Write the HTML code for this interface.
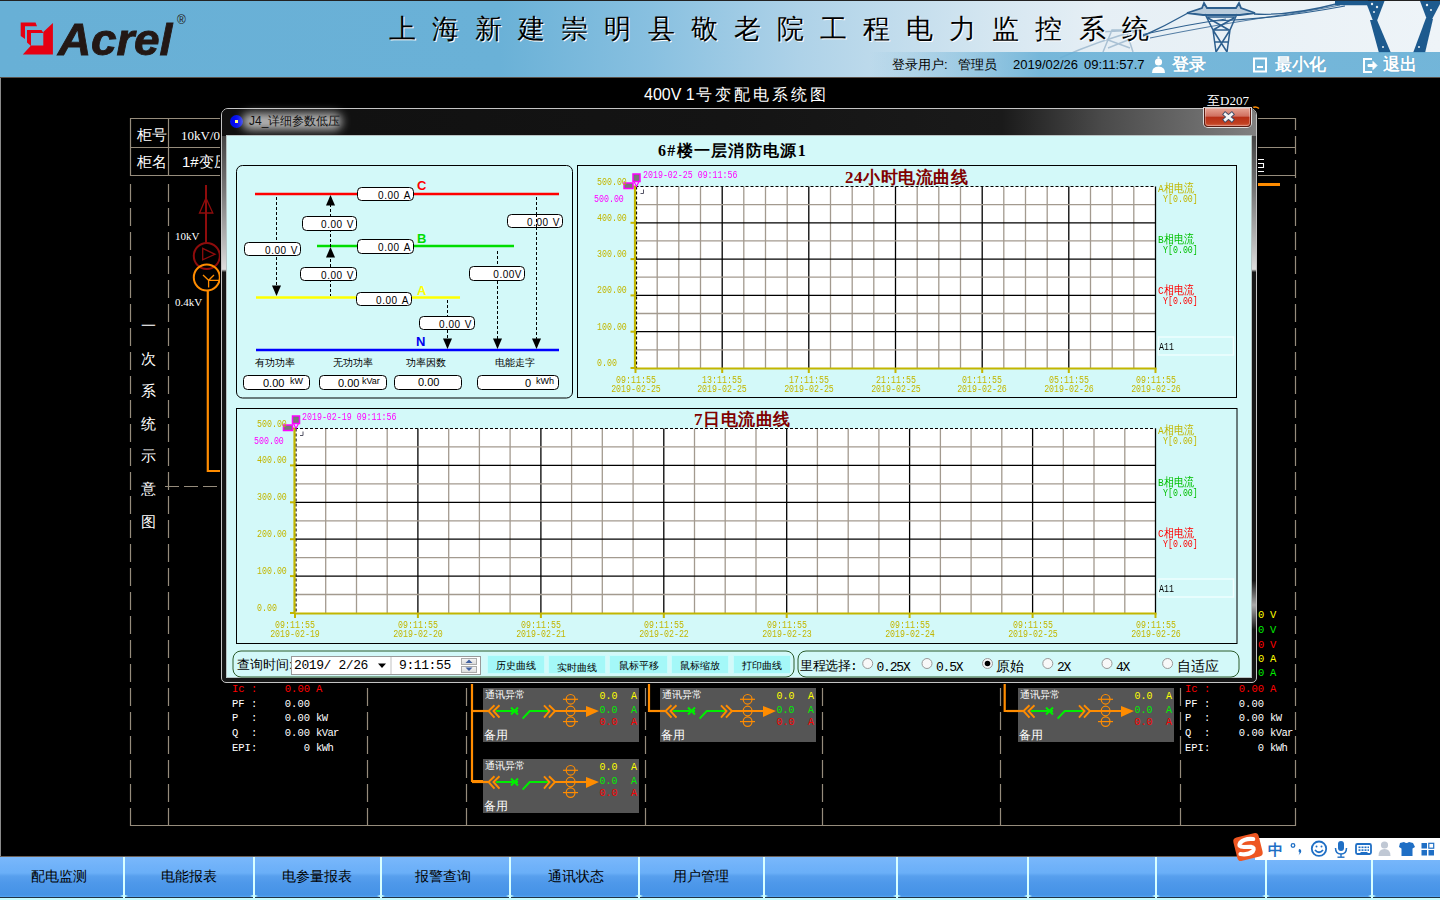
<!DOCTYPE html>
<html><head><meta charset="utf-8">
<style>
*{margin:0;padding:0;box-sizing:border-box}
html,body{width:1440px;height:900px;overflow:hidden;background:#000;font-family:"Liberation Sans",sans-serif}
.a{position:absolute}
#hdr{left:0;top:0;width:1440px;height:77px;background:linear-gradient(90deg,#68b0d6 0px,#6ab1d7 500px,#88c0e0 650px,#aed2e8 800px,#d6e7f1 1000px,#e6eff5 1100px,#eef4f8 1440px);border-top:1px solid #222;overflow:hidden}
#title{left:389px;top:12px;font-family:"Liberation Serif",serif;font-size:27px;letter-spacing:16.1px;color:#000;text-shadow:1px 1px 0 #fff;white-space:nowrap;line-height:34px}
#infobar{left:0;top:52px;width:1440px;height:25px;background:linear-gradient(90deg,rgba(104,176,214,0) 0px,rgba(104,176,214,0) 870px,rgba(104,176,214,0.88) 1040px,rgba(104,176,214,0.92) 1440px)}
.info{font-size:13px;color:#000;top:57px;white-space:nowrap;line-height:16px}
.wbtn{font-size:17px;color:#fff;top:55px;font-weight:bold;text-shadow:0 0 1px #4a90b8;white-space:nowrap;line-height:20px}
#nav{left:0;top:856px;width:1440px;height:44px;border-top:1px solid #6a6058;background:linear-gradient(180deg,#7ab8fb 0px,#70b2f9 9px,#6aaff8 16px,#58a0ee 19px,#4e98ea 26px,#4592e6 38px,#56a6f4 40px,#56a6f4 41px)}
#navline{left:0;top:897px;width:1440px;height:1px;background:#234}
#navline2{left:0;top:898px;width:1440px;height:2px;background:#c8fcff}
.sep{top:857px;width:2px;height:41px;background:#d8ffff}
.nt{top:866px;font-size:14px;color:#000;white-space:nowrap;line-height:20px}
</style></head><body>
<!-- HEADER -->
<div id="hdr" class="a">
</div>
<!-- HDRX -->
<!-- HEADER EXTRAS -->
<svg class="a" style="left:0;top:0" width="1440" height="77">
<g fill="#e60012">
<path d="M20.7 22.4 H35.5 L37 26.2 H25 V39 L20.7 36 Z"/>
<path d="M27 30 H41.5 L43.5 33 H31 V46 L27 42.5 Z"/>
<path d="M52.9 23 L52.9 54.4 L22.8 54.4 L31 45.5 L43.3 45.5 L43.3 32 Z"/>
</g>
<g opacity="0.35" stroke="#3a6d98" fill="none" stroke-width="1.5">
<path d="M1103 52 L1112 30 L1126 30 L1133 52 M1098 32 L1140 30 M1108 40 L1130 48 M1128 40 L1108 48"/>
<path d="M1060 58 Q1100 40 1140 30"/>
</g>
<g stroke="#2d5f8e" fill="none">
<path d="M1143 36 Q1165 26 1188 13" stroke-width="1.4"/>
<path d="M1143 34.5 Q1190 24 1226 19" stroke-width="1.2"/>
<path d="M1150 38 Q1230 22 1290 14 Q1320 9 1340 5" stroke-width="1.1" opacity="0.8"/>
<path d="M1254 14 Q1290 16 1336 4" stroke-width="1.3"/>
<path d="M1210 21 Q1270 20 1345 6" stroke-width="1.2"/>
<path d="M1187 13 L1202 8 L1204 3 L1207 8 L1236 8 L1239 3 L1241 8 L1255 13 L1240 15 L1203 15 Z" stroke-width="1.8" fill="#2d5f8e" fill-opacity="0.25"/>
<path d="M1205 14 L1213 30 L1216 52 M1237 14 L1230 30 L1227 52 M1207 17 L1235 17 M1213 30 L1230 30 M1208 18 L1229 30 M1234 18 L1213 30 M1213 30 L1227 52 M1230 30 L1216 52 M1215 42 L1228 42" stroke-width="1.5"/>
<path d="M1335 3 L1368 3" stroke="#1d5a8e" stroke-width="4.5"/>
<path d="M1365.5 1 L1384.5 1 L1375 26 Z" fill="#1d5a8e" stroke="none"/>
<path d="M1370 20 L1377 20 L1391 53 L1379 53 Z" fill="#1d5a8e" stroke="none"/>
<path d="M1420 1 L1440 1 L1440 4 L1429 25 Z" fill="#1d5a8e" stroke="none"/>
<path d="M1426 18 L1433 19 L1425 53 L1413 53 Z" fill="#1d5a8e" stroke="none"/>
<g fill="#e8f0f5" stroke="none"><circle cx="1372" cy="4" r="1.2"/><circle cx="1377" cy="7" r="1.2"/><circle cx="1374" cy="12" r="1"/><circle cx="1383" cy="47" r="1"/><circle cx="1427" cy="5" r="1.2"/><circle cx="1431" cy="10" r="1"/><circle cx="1419" cy="47" r="1"/></g>
</g>
</svg>
<div class="a" style="left:58px;top:15px;font-size:46px;font-weight:bold;font-style:italic;color:#231815;line-height:50px;white-space:nowrap;letter-spacing:-0.2px;-webkit-text-stroke:0.9px #231815;transform:scaleY(0.98);transform-origin:left top">Acrel</div>
<div class="a" style="left:177px;top:13px;font-size:12px;color:#231815;line-height:14px">®</div>


<!-- /HDRX -->
<div id="title" class="a">上海新建崇明县敬老院工程电力监控系统</div>
<div id="infobar" class="a"></div>
<div class="a info" style="left:892px">登录用户:</div>
<div class="a info" style="left:958px">管理员</div>
<div class="a info" style="left:1013px">2019/02/26</div>
<div class="a info" style="left:1084px">09:11:57.7</div>
<div class="a wbtn" style="left:1172px">登录</div>
<div class="a wbtn" style="left:1275px">最小化</div>
<div class="a wbtn" style="left:1383px">退出</div>
<svg class="a" style="left:1150px;top:56px" width="280" height="20">
<g fill="#fff">
<circle cx="8.5" cy="6" r="3.6"/>
<path d="M2 17 Q2 10.5 8.5 10.5 Q15 10.5 15 17 Z"/>
<path d="M7.5 0.5 h2 v2 h-2z"/>
</g>
<g fill="none" stroke="#fff" stroke-width="2">
<rect x="104" y="2.5" width="12" height="13"/>
<line x1="107" y1="11" x2="113" y2="11"/>
<path d="M222 3 L214 3 L214 16 L222 16"/>
</g>
<path d="M218 8.5 L223 8.5 L223 5.5 L227 9.5 L223 13.5 L223 10.5 L218 10.5 Z" fill="#fff" stroke="#fff" stroke-width="1"/>
</svg>


<!-- BACKGROUND DIAGRAM -->
<svg class="a" style="left:0;top:0" width="1440" height="900">
<line x1="0.5" y1="77" x2="0.5" y2="856" stroke="#8a8a8a" stroke-width="1"/>
<line x1="0" y1="77.5" x2="1440" y2="77.5" stroke="#5a5048" stroke-width="1"/>
<g stroke="#968c7c" stroke-width="1.2" fill="none">
<line x1="130.5" y1="118.5" x2="1295.5" y2="118.5"/>
<line x1="130.5" y1="147.5" x2="1295.5" y2="147.5"/>
<line x1="130.5" y1="175.5" x2="1295.5" y2="175.5"/>
<line x1="130.5" y1="118" x2="130.5" y2="176"/>
<line x1="168.5" y1="118" x2="168.5" y2="176"/>
<line x1="130.5" y1="825.5" x2="1295.5" y2="825.5"/>
</g>
<g stroke="#968c7c" stroke-width="1.2" stroke-dasharray="18 6" fill="none">
<line x1="130.5" y1="184" x2="130.5" y2="826"/>
<line x1="168.5" y1="184" x2="168.5" y2="826"/>
<line x1="367.5" y1="184" x2="367.5" y2="826"/>
<line x1="466.5" y1="184" x2="466.5" y2="826"/>
<line x1="645.5" y1="184" x2="645.5" y2="826"/>
<line x1="822.5" y1="184" x2="822.5" y2="826"/>
<line x1="1000.5" y1="184" x2="1000.5" y2="830"/>
<line x1="1180.5" y1="184" x2="1180.5" y2="826"/>
<line x1="1295.5" y1="118" x2="1295.5" y2="826" stroke-dashoffset="6"/>
</g>
<line x1="165" y1="486.5" x2="222" y2="486.5" stroke="#968c7c" stroke-width="1.2" stroke-dasharray="14 5"/>
<path d="M1258 159.5 H1264 M1258 163.5 H1263.5 V167.5 H1258 M1258 171.5 H1264" stroke="#fff" stroke-width="1.1" fill="none"/>
<path d="M1253 107.5 Q1256 106 1259 108.5" stroke="#ff8c00" stroke-width="1.6" fill="none"/>
<!-- transformer -->
<g fill="none" stroke-width="2">
<line x1="206" y1="185" x2="206" y2="243" stroke="#8e0c0c"/>
<path d="M206 198 L199.5 213 L212.8 213 Z" stroke="#8e0c0c" stroke-width="1.3"/>
<circle cx="206.8" cy="256" r="13" stroke="#8e0c0c"/>
<path d="M202.7 248.4 L215 254.3 L202.7 259.8 Z" stroke="#8e0c0c" stroke-width="1.3"/>
<circle cx="206.8" cy="277.5" r="13" stroke="#ff8c00"/>
<path d="M203 275 L208.6 280.3 L214 275 M208.6 280.3 L208.6 287.5 M208.6 280.3 L219.5 280.3" stroke="#ff8c00" stroke-width="1.3"/>
<path d="M207.8 291 L207.8 471 L222 471" stroke="#ff8c00" stroke-width="2.2"/>
<path d="M1257 184.5 L1280 184.5" stroke="#ff8c00" stroke-width="3"/>
<!-- bottom buses -->
<path d="M472 683 L472 781 L483 781 M472 711 L483 711" stroke="#ff8c00" stroke-width="2.2"/>
<path d="M649 683 L649 711 L660 711" stroke="#ff8c00" stroke-width="2.2"/>
<path d="M1004.7 683 L1004.7 711 L1018 711" stroke="#ff8c00" stroke-width="2.2"/>
</g>
</svg>
<div class="a" style="left:644px;top:85px;font-size:16px;color:#fff;white-space:nowrap;line-height:20px">400V 1<span style="letter-spacing:2.9px;margin-left:1.5px">号变配电系统图</span></div>
<div class="a" style="left:137px;top:126px;font-size:15px;color:#fff;white-space:nowrap;line-height:18px">柜号</div>
<div class="a" style="left:137px;top:153px;font-size:15px;color:#fff;white-space:nowrap;line-height:18px">柜名</div>
<div class="a" style="left:181px;top:128px;font-size:13px;color:#fff;white-space:nowrap;line-height:16px;font-family:'Liberation Serif',serif">10kV/0</div>
<div class="a" style="left:182px;top:153px;font-size:15px;color:#fff;white-space:nowrap;line-height:18px">1#变压</div>
<div class="a" style="left:175px;top:230px;font-size:11px;color:#fff;white-space:nowrap;line-height:13px;font-family:'Liberation Serif',serif">10kV</div>
<div class="a" style="left:175px;top:296px;font-size:11px;color:#fff;white-space:nowrap;line-height:13px;font-family:'Liberation Serif',serif">0.4kV</div>
<div class="a" style="left:140px;top:310px;width:16px;font-size:15px;color:#fff;line-height:32.6px;text-align:center">一次系统示意图</div>
<div class="a" style="left:1207px;top:93px;font-size:13px;color:#fff;white-space:nowrap;line-height:16px;font-family:'Liberation Serif',serif">至D207</div>

<!-- BOTTOM -->
<div class="a" style="left:483px;top:688px;width:156px;height:54px;background:#555"></div>
<div class="a" style="left:485px;top:689px;font-size:10px;color:#fff;font-family:'Liberation Sans',sans-serif;white-space:nowrap;line-height:12px;">通讯异常</div>
<div class="a" style="left:484px;top:728px;font-size:12px;color:#fff;font-family:'Liberation Sans',sans-serif;white-space:nowrap;line-height:14px;">备用</div>
<div class="a" style="left:599.5px;top:691px;font-size:10px;color:#ffff00;font-family:'Liberation Mono',monospace;white-space:nowrap;line-height:12px;">0.0</div>
<div class="a" style="left:631px;top:691px;font-size:10px;color:#ffff00;font-family:'Liberation Mono',monospace;white-space:nowrap;line-height:12px;">A</div>
<div class="a" style="left:599.5px;top:705px;font-size:10px;color:#00ee00;font-family:'Liberation Mono',monospace;white-space:nowrap;line-height:12px;">0.0</div>
<div class="a" style="left:631px;top:705px;font-size:10px;color:#00ee00;font-family:'Liberation Mono',monospace;white-space:nowrap;line-height:12px;">A</div>
<div class="a" style="left:599.5px;top:717px;font-size:10px;color:#ff0000;font-family:'Liberation Mono',monospace;white-space:nowrap;line-height:12px;">0.0</div>
<div class="a" style="left:631px;top:717px;font-size:10px;color:#ff0000;font-family:'Liberation Mono',monospace;white-space:nowrap;line-height:12px;">A</div>
<div class="a" style="left:483px;top:759px;width:156px;height:54px;background:#555"></div>
<div class="a" style="left:485px;top:760px;font-size:10px;color:#fff;font-family:'Liberation Sans',sans-serif;white-space:nowrap;line-height:12px;">通讯异常</div>
<div class="a" style="left:484px;top:799px;font-size:12px;color:#fff;font-family:'Liberation Sans',sans-serif;white-space:nowrap;line-height:14px;">备用</div>
<div class="a" style="left:599.5px;top:762px;font-size:10px;color:#ffff00;font-family:'Liberation Mono',monospace;white-space:nowrap;line-height:12px;">0.0</div>
<div class="a" style="left:631px;top:762px;font-size:10px;color:#ffff00;font-family:'Liberation Mono',monospace;white-space:nowrap;line-height:12px;">A</div>
<div class="a" style="left:599.5px;top:776px;font-size:10px;color:#00ee00;font-family:'Liberation Mono',monospace;white-space:nowrap;line-height:12px;">0.0</div>
<div class="a" style="left:631px;top:776px;font-size:10px;color:#00ee00;font-family:'Liberation Mono',monospace;white-space:nowrap;line-height:12px;">A</div>
<div class="a" style="left:599.5px;top:788px;font-size:10px;color:#ff0000;font-family:'Liberation Mono',monospace;white-space:nowrap;line-height:12px;">0.0</div>
<div class="a" style="left:631px;top:788px;font-size:10px;color:#ff0000;font-family:'Liberation Mono',monospace;white-space:nowrap;line-height:12px;">A</div>
<div class="a" style="left:660px;top:688px;width:156px;height:54px;background:#555"></div>
<div class="a" style="left:662px;top:689px;font-size:10px;color:#fff;font-family:'Liberation Sans',sans-serif;white-space:nowrap;line-height:12px;">通讯异常</div>
<div class="a" style="left:661px;top:728px;font-size:12px;color:#fff;font-family:'Liberation Sans',sans-serif;white-space:nowrap;line-height:14px;">备用</div>
<div class="a" style="left:776.5px;top:691px;font-size:10px;color:#ffff00;font-family:'Liberation Mono',monospace;white-space:nowrap;line-height:12px;">0.0</div>
<div class="a" style="left:808px;top:691px;font-size:10px;color:#ffff00;font-family:'Liberation Mono',monospace;white-space:nowrap;line-height:12px;">A</div>
<div class="a" style="left:776.5px;top:705px;font-size:10px;color:#00ee00;font-family:'Liberation Mono',monospace;white-space:nowrap;line-height:12px;">0.0</div>
<div class="a" style="left:808px;top:705px;font-size:10px;color:#00ee00;font-family:'Liberation Mono',monospace;white-space:nowrap;line-height:12px;">A</div>
<div class="a" style="left:776.5px;top:717px;font-size:10px;color:#ff0000;font-family:'Liberation Mono',monospace;white-space:nowrap;line-height:12px;">0.0</div>
<div class="a" style="left:808px;top:717px;font-size:10px;color:#ff0000;font-family:'Liberation Mono',monospace;white-space:nowrap;line-height:12px;">A</div>
<div class="a" style="left:1018px;top:688px;width:156px;height:54px;background:#555"></div>
<div class="a" style="left:1020px;top:689px;font-size:10px;color:#fff;font-family:'Liberation Sans',sans-serif;white-space:nowrap;line-height:12px;">通讯异常</div>
<div class="a" style="left:1019px;top:728px;font-size:12px;color:#fff;font-family:'Liberation Sans',sans-serif;white-space:nowrap;line-height:14px;">备用</div>
<div class="a" style="left:1134.5px;top:691px;font-size:10px;color:#ffff00;font-family:'Liberation Mono',monospace;white-space:nowrap;line-height:12px;">0.0</div>
<div class="a" style="left:1166px;top:691px;font-size:10px;color:#ffff00;font-family:'Liberation Mono',monospace;white-space:nowrap;line-height:12px;">A</div>
<div class="a" style="left:1134.5px;top:705px;font-size:10px;color:#00ee00;font-family:'Liberation Mono',monospace;white-space:nowrap;line-height:12px;">0.0</div>
<div class="a" style="left:1166px;top:705px;font-size:10px;color:#00ee00;font-family:'Liberation Mono',monospace;white-space:nowrap;line-height:12px;">A</div>
<div class="a" style="left:1134.5px;top:717px;font-size:10px;color:#ff0000;font-family:'Liberation Mono',monospace;white-space:nowrap;line-height:12px;">0.0</div>
<div class="a" style="left:1166px;top:717px;font-size:10px;color:#ff0000;font-family:'Liberation Mono',monospace;white-space:nowrap;line-height:12px;">A</div>
<div class="a" style="left:232px;top:683px;font-size:10.5px;color:#ff0000;font-family:'Liberation Mono',monospace;white-space:nowrap;line-height:12.5px;">Ic&nbsp;:</div>
<div class="a" style="left:246px;top:683px;font-size:10.5px;color:#ff0000;font-family:'Liberation Mono',monospace;white-space:nowrap;line-height:12.5px;width:64px;text-align:right">0.00</div>
<div class="a" style="left:316px;top:683px;font-size:10.5px;color:#ff0000;font-family:'Liberation Mono',monospace;white-space:nowrap;line-height:12.5px;letter-spacing:-0.6px">A</div>
<div class="a" style="left:1185px;top:683px;font-size:10.5px;color:#ff0000;font-family:'Liberation Mono',monospace;white-space:nowrap;line-height:12.5px;">Ic&nbsp;:</div>
<div class="a" style="left:1200px;top:683px;font-size:10.5px;color:#ff0000;font-family:'Liberation Mono',monospace;white-space:nowrap;line-height:12.5px;width:64px;text-align:right">0.00</div>
<div class="a" style="left:1270px;top:683px;font-size:10.5px;color:#ff0000;font-family:'Liberation Mono',monospace;white-space:nowrap;line-height:12.5px;letter-spacing:-0.6px">A</div>
<div class="a" style="left:232px;top:698px;font-size:10.5px;color:#fff;font-family:'Liberation Mono',monospace;white-space:nowrap;line-height:12.5px;">PF&nbsp;:</div>
<div class="a" style="left:246px;top:698px;font-size:10.5px;color:#fff;font-family:'Liberation Mono',monospace;white-space:nowrap;line-height:12.5px;width:64px;text-align:right">0.00</div>
<div class="a" style="left:1185px;top:698px;font-size:10.5px;color:#fff;font-family:'Liberation Mono',monospace;white-space:nowrap;line-height:12.5px;">PF&nbsp;:</div>
<div class="a" style="left:1200px;top:698px;font-size:10.5px;color:#fff;font-family:'Liberation Mono',monospace;white-space:nowrap;line-height:12.5px;width:64px;text-align:right">0.00</div>
<div class="a" style="left:232px;top:712px;font-size:10.5px;color:#fff;font-family:'Liberation Mono',monospace;white-space:nowrap;line-height:12.5px;">P&nbsp;&nbsp;:</div>
<div class="a" style="left:246px;top:712px;font-size:10.5px;color:#fff;font-family:'Liberation Mono',monospace;white-space:nowrap;line-height:12.5px;width:64px;text-align:right">0.00</div>
<div class="a" style="left:316px;top:712px;font-size:10.5px;color:#fff;font-family:'Liberation Mono',monospace;white-space:nowrap;line-height:12.5px;letter-spacing:-0.6px">kW</div>
<div class="a" style="left:1185px;top:712px;font-size:10.5px;color:#fff;font-family:'Liberation Mono',monospace;white-space:nowrap;line-height:12.5px;">P&nbsp;&nbsp;:</div>
<div class="a" style="left:1200px;top:712px;font-size:10.5px;color:#fff;font-family:'Liberation Mono',monospace;white-space:nowrap;line-height:12.5px;width:64px;text-align:right">0.00</div>
<div class="a" style="left:1270px;top:712px;font-size:10.5px;color:#fff;font-family:'Liberation Mono',monospace;white-space:nowrap;line-height:12.5px;letter-spacing:-0.6px">kW</div>
<div class="a" style="left:232px;top:727px;font-size:10.5px;color:#fff;font-family:'Liberation Mono',monospace;white-space:nowrap;line-height:12.5px;">Q&nbsp;&nbsp;:</div>
<div class="a" style="left:246px;top:727px;font-size:10.5px;color:#fff;font-family:'Liberation Mono',monospace;white-space:nowrap;line-height:12.5px;width:64px;text-align:right">0.00</div>
<div class="a" style="left:316px;top:727px;font-size:10.5px;color:#fff;font-family:'Liberation Mono',monospace;white-space:nowrap;line-height:12.5px;letter-spacing:-0.6px">kVar</div>
<div class="a" style="left:1185px;top:727px;font-size:10.5px;color:#fff;font-family:'Liberation Mono',monospace;white-space:nowrap;line-height:12.5px;">Q&nbsp;&nbsp;:</div>
<div class="a" style="left:1200px;top:727px;font-size:10.5px;color:#fff;font-family:'Liberation Mono',monospace;white-space:nowrap;line-height:12.5px;width:64px;text-align:right">0.00</div>
<div class="a" style="left:1270px;top:727px;font-size:10.5px;color:#fff;font-family:'Liberation Mono',monospace;white-space:nowrap;line-height:12.5px;letter-spacing:-0.6px">kVar</div>
<div class="a" style="left:232px;top:742px;font-size:10.5px;color:#fff;font-family:'Liberation Mono',monospace;white-space:nowrap;line-height:12.5px;">EPI:</div>
<div class="a" style="left:246px;top:742px;font-size:10.5px;color:#fff;font-family:'Liberation Mono',monospace;white-space:nowrap;line-height:12.5px;width:64px;text-align:right">0</div>
<div class="a" style="left:316px;top:742px;font-size:10.5px;color:#fff;font-family:'Liberation Mono',monospace;white-space:nowrap;line-height:12.5px;letter-spacing:-0.6px">kWh</div>
<div class="a" style="left:1185px;top:742px;font-size:10.5px;color:#fff;font-family:'Liberation Mono',monospace;white-space:nowrap;line-height:12.5px;">EPI:</div>
<div class="a" style="left:1200px;top:742px;font-size:10.5px;color:#fff;font-family:'Liberation Mono',monospace;white-space:nowrap;line-height:12.5px;width:64px;text-align:right">0</div>
<div class="a" style="left:1270px;top:742px;font-size:10.5px;color:#fff;font-family:'Liberation Mono',monospace;white-space:nowrap;line-height:12.5px;letter-spacing:-0.6px">kWh</div>
<div class="a" style="left:1258px;top:609px;font-size:10.5px;color:#ffff00;font-family:'Liberation Mono',monospace;white-space:nowrap;line-height:12.5px;">0</div>
<div class="a" style="left:1270px;top:609px;font-size:10.5px;color:#ffff00;font-family:'Liberation Mono',monospace;white-space:nowrap;line-height:12.5px;">V</div>
<div class="a" style="left:1258px;top:624px;font-size:10.5px;color:#00ee00;font-family:'Liberation Mono',monospace;white-space:nowrap;line-height:12.5px;">0</div>
<div class="a" style="left:1270px;top:624px;font-size:10.5px;color:#00ee00;font-family:'Liberation Mono',monospace;white-space:nowrap;line-height:12.5px;">V</div>
<div class="a" style="left:1258px;top:639px;font-size:10.5px;color:#ff0000;font-family:'Liberation Mono',monospace;white-space:nowrap;line-height:12.5px;">0</div>
<div class="a" style="left:1270px;top:639px;font-size:10.5px;color:#ff0000;font-family:'Liberation Mono',monospace;white-space:nowrap;line-height:12.5px;">V</div>
<div class="a" style="left:1258px;top:653px;font-size:10.5px;color:#ffff00;font-family:'Liberation Mono',monospace;white-space:nowrap;line-height:12.5px;">0</div>
<div class="a" style="left:1270px;top:653px;font-size:10.5px;color:#ffff00;font-family:'Liberation Mono',monospace;white-space:nowrap;line-height:12.5px;">A</div>
<div class="a" style="left:1258px;top:667px;font-size:10.5px;color:#00ee00;font-family:'Liberation Mono',monospace;white-space:nowrap;line-height:12.5px;">0</div>
<div class="a" style="left:1270px;top:667px;font-size:10.5px;color:#00ee00;font-family:'Liberation Mono',monospace;white-space:nowrap;line-height:12.5px;">A</div>
<svg class="a" style="left:0;top:0" width="1440" height="900"><path d="M472 711 L488 711" stroke="#ff8c00" stroke-width="2.2" fill="none"/>
<path d="M494.5 705.3 L488.5 711 L494.5 717.7 M499.5 705.3 L493.5 711 L499.5 717.7" stroke="#ff8c00" stroke-width="1.9" fill="none"/>
<path d="M496 711 L518 711 M511 707.5 L518 714.5 M518 707.5 L511 714.5" stroke="#00ee00" stroke-width="2" fill="none"/>
<path d="M522.6 718.6 L529.7 711 L548 711" stroke="#00ee00" stroke-width="2" fill="none"/>
<path d="M544 705.3 L549.5 711 L544 717.7 M549 705.3 L555 711 L549 717.7" stroke="#ff8c00" stroke-width="1.9" fill="none"/>
<path d="M555 711 L588 711" stroke="#ff8c00" stroke-width="2" fill="none"/>
<path d="M586 706 L599 711 L586 717 Z" fill="#ff8c00"/>
<ellipse cx="570.6" cy="699.3" rx="4.4" ry="4.8" stroke="#ff8c00" stroke-width="1.2" fill="none"/>
<line x1="563" y1="699.3" x2="578" y2="699.3" stroke="#ff8c00" stroke-width="1.2"/>
<ellipse cx="570.6" cy="711" rx="4.4" ry="4.8" stroke="#ff8c00" stroke-width="1.2" fill="none"/>
<line x1="563" y1="711" x2="578" y2="711" stroke="#ff8c00" stroke-width="1.2"/>
<ellipse cx="570.6" cy="721.6" rx="4.4" ry="4.8" stroke="#ff8c00" stroke-width="1.2" fill="none"/>
<line x1="563" y1="721.6" x2="578" y2="721.6" stroke="#ff8c00" stroke-width="1.2"/>
<path d="M472 782 L488 782" stroke="#ff8c00" stroke-width="2.2" fill="none"/>
<path d="M494.5 776.3 L488.5 782 L494.5 788.7 M499.5 776.3 L493.5 782 L499.5 788.7" stroke="#ff8c00" stroke-width="1.9" fill="none"/>
<path d="M496 782 L518 782 M511 778.5 L518 785.5 M518 778.5 L511 785.5" stroke="#00ee00" stroke-width="2" fill="none"/>
<path d="M522.6 789.6 L529.7 782 L548 782" stroke="#00ee00" stroke-width="2" fill="none"/>
<path d="M544 776.3 L549.5 782 L544 788.7 M549 776.3 L555 782 L549 788.7" stroke="#ff8c00" stroke-width="1.9" fill="none"/>
<path d="M555 782 L588 782" stroke="#ff8c00" stroke-width="2" fill="none"/>
<path d="M586 777 L599 782 L586 788 Z" fill="#ff8c00"/>
<ellipse cx="570.6" cy="770.3" rx="4.4" ry="4.8" stroke="#ff8c00" stroke-width="1.2" fill="none"/>
<line x1="563" y1="770.3" x2="578" y2="770.3" stroke="#ff8c00" stroke-width="1.2"/>
<ellipse cx="570.6" cy="782" rx="4.4" ry="4.8" stroke="#ff8c00" stroke-width="1.2" fill="none"/>
<line x1="563" y1="782" x2="578" y2="782" stroke="#ff8c00" stroke-width="1.2"/>
<ellipse cx="570.6" cy="792.6" rx="4.4" ry="4.8" stroke="#ff8c00" stroke-width="1.2" fill="none"/>
<line x1="563" y1="792.6" x2="578" y2="792.6" stroke="#ff8c00" stroke-width="1.2"/>
<path d="M649 711 L665 711" stroke="#ff8c00" stroke-width="2.2" fill="none"/>
<path d="M671.5 705.3 L665.5 711 L671.5 717.7 M676.5 705.3 L670.5 711 L676.5 717.7" stroke="#ff8c00" stroke-width="1.9" fill="none"/>
<path d="M673 711 L695 711 M688 707.5 L695 714.5 M695 707.5 L688 714.5" stroke="#00ee00" stroke-width="2" fill="none"/>
<path d="M699.6 718.6 L706.7 711 L725 711" stroke="#00ee00" stroke-width="2" fill="none"/>
<path d="M721 705.3 L726.5 711 L721 717.7 M726 705.3 L732 711 L726 717.7" stroke="#ff8c00" stroke-width="1.9" fill="none"/>
<path d="M732 711 L765 711" stroke="#ff8c00" stroke-width="2" fill="none"/>
<path d="M763 706 L776 711 L763 717 Z" fill="#ff8c00"/>
<ellipse cx="747.6" cy="699.3" rx="4.4" ry="4.8" stroke="#ff8c00" stroke-width="1.2" fill="none"/>
<line x1="740" y1="699.3" x2="755" y2="699.3" stroke="#ff8c00" stroke-width="1.2"/>
<ellipse cx="747.6" cy="711" rx="4.4" ry="4.8" stroke="#ff8c00" stroke-width="1.2" fill="none"/>
<line x1="740" y1="711" x2="755" y2="711" stroke="#ff8c00" stroke-width="1.2"/>
<ellipse cx="747.6" cy="721.6" rx="4.4" ry="4.8" stroke="#ff8c00" stroke-width="1.2" fill="none"/>
<line x1="740" y1="721.6" x2="755" y2="721.6" stroke="#ff8c00" stroke-width="1.2"/>
<path d="M1007 711 L1023 711" stroke="#ff8c00" stroke-width="2.2" fill="none"/>
<path d="M1029.5 705.3 L1023.5 711 L1029.5 717.7 M1034.5 705.3 L1028.5 711 L1034.5 717.7" stroke="#ff8c00" stroke-width="1.9" fill="none"/>
<path d="M1031 711 L1053 711 M1046 707.5 L1053 714.5 M1053 707.5 L1046 714.5" stroke="#00ee00" stroke-width="2" fill="none"/>
<path d="M1057.6 718.6 L1064.7 711 L1083 711" stroke="#00ee00" stroke-width="2" fill="none"/>
<path d="M1079 705.3 L1084.5 711 L1079 717.7 M1084 705.3 L1090 711 L1084 717.7" stroke="#ff8c00" stroke-width="1.9" fill="none"/>
<path d="M1090 711 L1123 711" stroke="#ff8c00" stroke-width="2" fill="none"/>
<path d="M1121 706 L1134 711 L1121 717 Z" fill="#ff8c00"/>
<ellipse cx="1105.6" cy="699.3" rx="4.4" ry="4.8" stroke="#ff8c00" stroke-width="1.2" fill="none"/>
<line x1="1098" y1="699.3" x2="1113" y2="699.3" stroke="#ff8c00" stroke-width="1.2"/>
<ellipse cx="1105.6" cy="711" rx="4.4" ry="4.8" stroke="#ff8c00" stroke-width="1.2" fill="none"/>
<line x1="1098" y1="711" x2="1113" y2="711" stroke="#ff8c00" stroke-width="1.2"/>
<ellipse cx="1105.6" cy="721.6" rx="4.4" ry="4.8" stroke="#ff8c00" stroke-width="1.2" fill="none"/>
<line x1="1098" y1="721.6" x2="1113" y2="721.6" stroke="#ff8c00" stroke-width="1.2"/></svg>
<!-- /BOTTOM -->
<!-- DIALOG -->
<div class="a" id="dlg" style="left:221px;top:108px;width:1036px;height:575px;border:1px solid #c4c4c4;border-radius:7px 7px 5px 5px;background:#161616;box-shadow:0 0 0 1px #000"></div>
<div class="a" style="left:222px;top:109px;width:1034px;height:27px;border-radius:6px 6px 0 0;background:linear-gradient(90deg,#101010 0px,#141414 500px,#1a1a1a 780px,#4a4a4a 880px,#666 960px,#808080 1034px)"></div>
<div class="a" style="left:222px;top:136px;width:4px;height:136px;background:linear-gradient(180deg,#444 0%,#777 40%,#bbb 80%,#ddd 98%,#222 100%)"></div>
<div class="a" style="left:1252px;top:136px;width:4px;height:136px;background:linear-gradient(180deg,#444 0%,#777 40%,#bbb 80%,#ddd 98%,#222 100%)"></div>
<div class="a" style="left:1252px;top:580px;width:4px;height:50px;background:linear-gradient(180deg,#111 0%,#aaa 50%,#111 100%)"></div>
<div class="a" style="left:230px;top:115px;width:13px;height:13px;border-radius:50%;background:radial-gradient(circle,#ffff80 0 1.5px,#0000ff 2px,#0020d0 100%)"></div>
<div class="a" style="left:242px;top:113px;width:100px;height:17px;border-radius:8px;background:rgba(235,235,235,0.75);filter:blur(5px)"></div>
<div class="a" style="left:249px;top:114px;font-size:12px;color:#111;font-family:'Liberation Sans',sans-serif;white-space:nowrap;line-height:14px;">J4_详细参数低压</div>
<div class="a" style="left:1204px;top:108px;width:47px;height:19px;border:1px solid #5a1a10;border-top:none;border-radius:0 0 4px 4px;background:linear-gradient(180deg,#e8a595 0%,#d07060 45%,#b83018 52%,#c04020 85%,#d86a50 100%);box-shadow:inset 0 0 0 1px rgba(255,255,255,0.3),0 0 0 1px rgba(240,240,240,0.85)"></div>
<svg class="a" style="left:1221px;top:110px" width="16" height="14"><path d="M4.3 4.3 L10.7 9.7 M10.7 4.3 L4.3 9.7" stroke="#3c4a66" stroke-width="4.6" stroke-linecap="square"/><path d="M4.3 4.3 L10.7 9.7 M10.7 4.3 L4.3 9.7" stroke="#f4f4f4" stroke-width="2.8" stroke-linecap="square"/></svg>
<div class="a" style="left:226px;top:135px;width:1026px;height:543px;background:#d3f9f9;border:1px solid #b8c4c4;"></div>
<svg class="a" style="left:0;top:0" width="1440" height="900"><rect x="236.5" y="165.5" width="336" height="232.5" rx="6" fill="none" stroke="#000" stroke-width="1"/>
<line x1="255" y1="194" x2="559" y2="194" stroke="#ff0000" stroke-width="2.5"/>
<line x1="317" y1="246" x2="514" y2="246" stroke="#00dd00" stroke-width="2.5"/>
<line x1="256" y1="297.5" x2="460" y2="297.5" stroke="#ffff00" stroke-width="2.5"/>
<line x1="256" y1="350" x2="559" y2="350" stroke="#0000ff" stroke-width="2.5"/>
<line x1="276.5" y1="197" x2="276.5" y2="290" stroke="#000" stroke-width="1" stroke-dasharray="3 2"/>
<path d="M272.0 285.5 L281.0 285.5 L276.5 296 Z" fill="#000"/>
<line x1="330.5" y1="204" x2="330.5" y2="296" stroke="#000" stroke-width="1" stroke-dasharray="3 2"/>
<path d="M326.0 205.5 L335.0 205.5 L330.5 195 Z" fill="#000"/>
<path d="M326.0 257.5 L335.0 257.5 L330.5 247 Z" fill="#000"/>
<line x1="447.5" y1="300" x2="447.5" y2="342" stroke="#000" stroke-width="1" stroke-dasharray="3 2"/>
<path d="M443.0 338.5 L452.0 338.5 L447.5 349 Z" fill="#000"/>
<line x1="497.5" y1="251" x2="497.5" y2="342" stroke="#000" stroke-width="1" stroke-dasharray="3 2"/>
<path d="M493.0 338.5 L502.0 338.5 L497.5 349 Z" fill="#000"/>
<line x1="536.5" y1="197" x2="536.5" y2="342" stroke="#000" stroke-width="1" stroke-dasharray="3 2"/>
<path d="M532.0 338.5 L541.0 338.5 L536.5 349 Z" fill="#000"/>
<rect x="357.5" y="187.5" width="56" height="13" rx="4" fill="#fff" stroke="#000" stroke-width="1"/>
<rect x="302.5" y="216.5" width="54" height="14" rx="4" fill="#fff" stroke="#000" stroke-width="1"/>
<rect x="244.5" y="242.5" width="56" height="13" rx="4" fill="#fff" stroke="#000" stroke-width="1"/>
<rect x="357.5" y="239.5" width="56" height="14" rx="4" fill="#fff" stroke="#000" stroke-width="1"/>
<rect x="300.5" y="267.5" width="56" height="13" rx="4" fill="#fff" stroke="#000" stroke-width="1"/>
<rect x="356.5" y="292.5" width="55" height="13" rx="4" fill="#fff" stroke="#000" stroke-width="1"/>
<rect x="419.5" y="316.5" width="55" height="13" rx="4" fill="#fff" stroke="#000" stroke-width="1"/>
<rect x="469.5" y="266.5" width="55" height="14" rx="4" fill="#fff" stroke="#000" stroke-width="1"/>
<rect x="507.5" y="214.5" width="55" height="13" rx="4" fill="#fff" stroke="#000" stroke-width="1"/>
<line x1="536.5" y1="214" x2="536.5" y2="228" stroke="#000" stroke-width="1" stroke-dasharray="3 2"/>
<rect x="243.5" y="375.5" width="66" height="14" rx="4" fill="#fff" stroke="#000" stroke-width="1"/>
<rect x="319.5" y="375.5" width="67" height="14" rx="4" fill="#fff" stroke="#000" stroke-width="1"/>
<rect x="394.5" y="375.5" width="67" height="14" rx="4" fill="#fff" stroke="#000" stroke-width="1"/>
<rect x="477.5" y="375.5" width="81" height="14" rx="4" fill="#fff" stroke="#000" stroke-width="1"/>
<rect x="577.5" y="165.5" width="659" height="232" fill="none" stroke="#000" stroke-width="1"/>
<rect x="236.5" y="408.5" width="1000.5" height="235" fill="none" stroke="#000" stroke-width="1"/>
<rect x="635.5" y="186.5" width="520.0" height="181.5" fill="#fff"/>
<line x1="657.2" y1="186.5" x2="657.2" y2="368" stroke="#a39a8f" stroke-width="1.3"/>
<line x1="678.8" y1="186.5" x2="678.8" y2="368" stroke="#a39a8f" stroke-width="1.3"/>
<line x1="700.5" y1="186.5" x2="700.5" y2="368" stroke="#a39a8f" stroke-width="1.3"/>
<line x1="722.2" y1="186.5" x2="722.2" y2="368" stroke="#000" stroke-width="1.3"/>
<line x1="743.8" y1="186.5" x2="743.8" y2="368" stroke="#a39a8f" stroke-width="1.3"/>
<line x1="765.5" y1="186.5" x2="765.5" y2="368" stroke="#a39a8f" stroke-width="1.3"/>
<line x1="787.2" y1="186.5" x2="787.2" y2="368" stroke="#a39a8f" stroke-width="1.3"/>
<line x1="808.8" y1="186.5" x2="808.8" y2="368" stroke="#000" stroke-width="1.3"/>
<line x1="830.5" y1="186.5" x2="830.5" y2="368" stroke="#a39a8f" stroke-width="1.3"/>
<line x1="852.2" y1="186.5" x2="852.2" y2="368" stroke="#a39a8f" stroke-width="1.3"/>
<line x1="873.8" y1="186.5" x2="873.8" y2="368" stroke="#a39a8f" stroke-width="1.3"/>
<line x1="895.5" y1="186.5" x2="895.5" y2="368" stroke="#000" stroke-width="1.3"/>
<line x1="917.2" y1="186.5" x2="917.2" y2="368" stroke="#a39a8f" stroke-width="1.3"/>
<line x1="938.8" y1="186.5" x2="938.8" y2="368" stroke="#a39a8f" stroke-width="1.3"/>
<line x1="960.5" y1="186.5" x2="960.5" y2="368" stroke="#a39a8f" stroke-width="1.3"/>
<line x1="982.2" y1="186.5" x2="982.2" y2="368" stroke="#000" stroke-width="1.3"/>
<line x1="1003.8" y1="186.5" x2="1003.8" y2="368" stroke="#a39a8f" stroke-width="1.3"/>
<line x1="1025.5" y1="186.5" x2="1025.5" y2="368" stroke="#a39a8f" stroke-width="1.3"/>
<line x1="1047.2" y1="186.5" x2="1047.2" y2="368" stroke="#a39a8f" stroke-width="1.3"/>
<line x1="1068.8" y1="186.5" x2="1068.8" y2="368" stroke="#000" stroke-width="1.3"/>
<line x1="1090.5" y1="186.5" x2="1090.5" y2="368" stroke="#a39a8f" stroke-width="1.3"/>
<line x1="1112.2" y1="186.5" x2="1112.2" y2="368" stroke="#a39a8f" stroke-width="1.3"/>
<line x1="1133.8" y1="186.5" x2="1133.8" y2="368" stroke="#a39a8f" stroke-width="1.3"/>
<line x1="635.5" y1="204.7" x2="1155.5" y2="204.7" stroke="#a39a8f" stroke-width="1.3"/>
<line x1="635.5" y1="222.8" x2="1155.5" y2="222.8" stroke="#000" stroke-width="1.3"/>
<line x1="635.5" y1="240.9" x2="1155.5" y2="240.9" stroke="#a39a8f" stroke-width="1.3"/>
<line x1="635.5" y1="259.1" x2="1155.5" y2="259.1" stroke="#000" stroke-width="1.3"/>
<line x1="635.5" y1="277.2" x2="1155.5" y2="277.2" stroke="#a39a8f" stroke-width="1.3"/>
<line x1="635.5" y1="295.4" x2="1155.5" y2="295.4" stroke="#000" stroke-width="1.3"/>
<line x1="635.5" y1="313.5" x2="1155.5" y2="313.5" stroke="#a39a8f" stroke-width="1.3"/>
<line x1="635.5" y1="331.7" x2="1155.5" y2="331.7" stroke="#000" stroke-width="1.3"/>
<line x1="635.5" y1="349.9" x2="1155.5" y2="349.9" stroke="#a39a8f" stroke-width="1.3"/>
<line x1="1155.5" y1="186.5" x2="1155.5" y2="368" stroke="#000" stroke-width="1.3"/>
<line x1="635.5" y1="186.5" x2="1155.5" y2="186.5" stroke="#000" stroke-width="1.2" stroke-dasharray="3 2"/>
<line x1="636.5" y1="186.5" x2="636.5" y2="368" stroke="#000" stroke-width="1.2" stroke-dasharray="3 2"/>
<line x1="635.0" y1="186.5" x2="635.0" y2="369" stroke="#c2b600" stroke-width="2.2"/>
<line x1="634.5" y1="368.5" x2="1156.5" y2="368.5" stroke="#c2b600" stroke-width="2"/>
<line x1="630.5" y1="368.0" x2="635.5" y2="368.0" stroke="#c2b600" stroke-width="2"/>
<line x1="630.5" y1="331.7" x2="635.5" y2="331.7" stroke="#c2b600" stroke-width="2"/>
<line x1="630.5" y1="295.4" x2="635.5" y2="295.4" stroke="#c2b600" stroke-width="2"/>
<line x1="630.5" y1="259.1" x2="635.5" y2="259.1" stroke="#c2b600" stroke-width="2"/>
<line x1="630.5" y1="222.8" x2="635.5" y2="222.8" stroke="#c2b600" stroke-width="2"/>
<line x1="630.5" y1="186.5" x2="635.5" y2="186.5" stroke="#c2b600" stroke-width="2"/>
<line x1="635.5" y1="368" x2="635.5" y2="373" stroke="#c2b600" stroke-width="2"/>
<line x1="722.2" y1="368" x2="722.2" y2="373" stroke="#c2b600" stroke-width="2"/>
<line x1="808.8" y1="368" x2="808.8" y2="373" stroke="#c2b600" stroke-width="2"/>
<line x1="895.5" y1="368" x2="895.5" y2="373" stroke="#c2b600" stroke-width="2"/>
<line x1="982.2" y1="368" x2="982.2" y2="373" stroke="#c2b600" stroke-width="2"/>
<line x1="1068.8" y1="368" x2="1068.8" y2="373" stroke="#c2b600" stroke-width="2"/>
<line x1="1155.5" y1="368" x2="1155.5" y2="373" stroke="#c2b600" stroke-width="2"/>
<path d="M634.0 181.5 L636.5 186.5 L639.0 181.5" fill="none" stroke="#ff00ff" stroke-width="1.2"/>
<rect x="633.0" y="174.0" width="7" height="7.5" fill="#777" stroke="#ff00ff" stroke-width="1.5"/>
<rect x="624.0" y="183.0" width="9" height="5.5" fill="#777" stroke="#ff00ff" stroke-width="1.5"/>
<path d="M640.5 193.5 L643.5 193.5 L643.5 189.5" fill="none" stroke="#556" stroke-width="1"/>
<rect x="1158.5" y="337" width="75" height="18" fill="none" stroke="#eefefe" stroke-width="1.5"/>
<rect x="295" y="428.5" width="860.5" height="184.5" fill="#fff"/>
<line x1="325.7" y1="428.5" x2="325.7" y2="613" stroke="#a39a8f" stroke-width="1.3"/>
<line x1="356.5" y1="428.5" x2="356.5" y2="613" stroke="#a39a8f" stroke-width="1.3"/>
<line x1="387.2" y1="428.5" x2="387.2" y2="613" stroke="#a39a8f" stroke-width="1.3"/>
<line x1="417.9" y1="428.5" x2="417.9" y2="613" stroke="#000" stroke-width="1.3"/>
<line x1="448.7" y1="428.5" x2="448.7" y2="613" stroke="#a39a8f" stroke-width="1.3"/>
<line x1="479.4" y1="428.5" x2="479.4" y2="613" stroke="#a39a8f" stroke-width="1.3"/>
<line x1="510.1" y1="428.5" x2="510.1" y2="613" stroke="#a39a8f" stroke-width="1.3"/>
<line x1="540.9" y1="428.5" x2="540.9" y2="613" stroke="#000" stroke-width="1.3"/>
<line x1="571.6" y1="428.5" x2="571.6" y2="613" stroke="#a39a8f" stroke-width="1.3"/>
<line x1="602.3" y1="428.5" x2="602.3" y2="613" stroke="#a39a8f" stroke-width="1.3"/>
<line x1="633.1" y1="428.5" x2="633.1" y2="613" stroke="#a39a8f" stroke-width="1.3"/>
<line x1="663.8" y1="428.5" x2="663.8" y2="613" stroke="#000" stroke-width="1.3"/>
<line x1="694.5" y1="428.5" x2="694.5" y2="613" stroke="#a39a8f" stroke-width="1.3"/>
<line x1="725.2" y1="428.5" x2="725.2" y2="613" stroke="#a39a8f" stroke-width="1.3"/>
<line x1="756.0" y1="428.5" x2="756.0" y2="613" stroke="#a39a8f" stroke-width="1.3"/>
<line x1="786.7" y1="428.5" x2="786.7" y2="613" stroke="#000" stroke-width="1.3"/>
<line x1="817.4" y1="428.5" x2="817.4" y2="613" stroke="#a39a8f" stroke-width="1.3"/>
<line x1="848.2" y1="428.5" x2="848.2" y2="613" stroke="#a39a8f" stroke-width="1.3"/>
<line x1="878.9" y1="428.5" x2="878.9" y2="613" stroke="#a39a8f" stroke-width="1.3"/>
<line x1="909.6" y1="428.5" x2="909.6" y2="613" stroke="#000" stroke-width="1.3"/>
<line x1="940.4" y1="428.5" x2="940.4" y2="613" stroke="#a39a8f" stroke-width="1.3"/>
<line x1="971.1" y1="428.5" x2="971.1" y2="613" stroke="#a39a8f" stroke-width="1.3"/>
<line x1="1001.8" y1="428.5" x2="1001.8" y2="613" stroke="#a39a8f" stroke-width="1.3"/>
<line x1="1032.6" y1="428.5" x2="1032.6" y2="613" stroke="#000" stroke-width="1.3"/>
<line x1="1063.3" y1="428.5" x2="1063.3" y2="613" stroke="#a39a8f" stroke-width="1.3"/>
<line x1="1094.0" y1="428.5" x2="1094.0" y2="613" stroke="#a39a8f" stroke-width="1.3"/>
<line x1="1124.8" y1="428.5" x2="1124.8" y2="613" stroke="#a39a8f" stroke-width="1.3"/>
<line x1="295" y1="446.9" x2="1155.5" y2="446.9" stroke="#a39a8f" stroke-width="1.3"/>
<line x1="295" y1="465.4" x2="1155.5" y2="465.4" stroke="#000" stroke-width="1.3"/>
<line x1="295" y1="483.9" x2="1155.5" y2="483.9" stroke="#a39a8f" stroke-width="1.3"/>
<line x1="295" y1="502.3" x2="1155.5" y2="502.3" stroke="#000" stroke-width="1.3"/>
<line x1="295" y1="520.8" x2="1155.5" y2="520.8" stroke="#a39a8f" stroke-width="1.3"/>
<line x1="295" y1="539.2" x2="1155.5" y2="539.2" stroke="#000" stroke-width="1.3"/>
<line x1="295" y1="557.6" x2="1155.5" y2="557.6" stroke="#a39a8f" stroke-width="1.3"/>
<line x1="295" y1="576.1" x2="1155.5" y2="576.1" stroke="#000" stroke-width="1.3"/>
<line x1="295" y1="594.5" x2="1155.5" y2="594.5" stroke="#a39a8f" stroke-width="1.3"/>
<line x1="1155.5" y1="428.5" x2="1155.5" y2="613" stroke="#000" stroke-width="1.3"/>
<line x1="295" y1="428.5" x2="1155.5" y2="428.5" stroke="#000" stroke-width="1.2" stroke-dasharray="3 2"/>
<line x1="296" y1="428.5" x2="296" y2="613" stroke="#000" stroke-width="1.2" stroke-dasharray="3 2"/>
<line x1="294.5" y1="428.5" x2="294.5" y2="614" stroke="#c2b600" stroke-width="2.2"/>
<line x1="294" y1="613.5" x2="1156.5" y2="613.5" stroke="#c2b600" stroke-width="2"/>
<line x1="290" y1="613.0" x2="295" y2="613.0" stroke="#c2b600" stroke-width="2"/>
<line x1="290" y1="576.1" x2="295" y2="576.1" stroke="#c2b600" stroke-width="2"/>
<line x1="290" y1="539.2" x2="295" y2="539.2" stroke="#c2b600" stroke-width="2"/>
<line x1="290" y1="502.3" x2="295" y2="502.3" stroke="#c2b600" stroke-width="2"/>
<line x1="290" y1="465.4" x2="295" y2="465.4" stroke="#c2b600" stroke-width="2"/>
<line x1="290" y1="428.5" x2="295" y2="428.5" stroke="#c2b600" stroke-width="2"/>
<line x1="295.0" y1="613" x2="295.0" y2="618" stroke="#c2b600" stroke-width="2"/>
<line x1="417.9" y1="613" x2="417.9" y2="618" stroke="#c2b600" stroke-width="2"/>
<line x1="540.9" y1="613" x2="540.9" y2="618" stroke="#c2b600" stroke-width="2"/>
<line x1="663.8" y1="613" x2="663.8" y2="618" stroke="#c2b600" stroke-width="2"/>
<line x1="786.7" y1="613" x2="786.7" y2="618" stroke="#c2b600" stroke-width="2"/>
<line x1="909.6" y1="613" x2="909.6" y2="618" stroke="#c2b600" stroke-width="2"/>
<line x1="1032.6" y1="613" x2="1032.6" y2="618" stroke="#c2b600" stroke-width="2"/>
<line x1="1155.5" y1="613" x2="1155.5" y2="618" stroke="#c2b600" stroke-width="2"/>
<path d="M293.5 423.5 L296 428.5 L298.5 423.5" fill="none" stroke="#ff00ff" stroke-width="1.2"/>
<rect x="292.5" y="416.0" width="7" height="7.5" fill="#777" stroke="#ff00ff" stroke-width="1.5"/>
<rect x="283.5" y="425.0" width="9" height="5.5" fill="#777" stroke="#ff00ff" stroke-width="1.5"/>
<path d="M300 435.5 L303 435.5 L303 431.5" fill="none" stroke="#556" stroke-width="1"/>
<rect x="1158.5" y="579" width="75" height="18" fill="none" stroke="#eefefe" stroke-width="1.5"/>
<rect x="233" y="651" width="561" height="26" rx="8" fill="none" stroke="#2a5a2a" stroke-width="1"/>
<rect x="798" y="651" width="441" height="26" rx="8" fill="none" stroke="#2a5a2a" stroke-width="1"/>
<circle cx="867.7" cy="663.5" r="5" fill="#f8f8f8" stroke="#999" stroke-width="1"/>
<circle cx="927" cy="663.5" r="5" fill="#f8f8f8" stroke="#999" stroke-width="1"/>
<circle cx="987.5" cy="663.5" r="5" fill="#f8f8f8" stroke="#999" stroke-width="1"/>
<circle cx="987.5" cy="663.5" r="2.8" fill="#000"/>
<circle cx="1047.8" cy="663.5" r="5" fill="#f8f8f8" stroke="#999" stroke-width="1"/>
<circle cx="1107" cy="663.5" r="5" fill="#f8f8f8" stroke="#999" stroke-width="1"/>
<circle cx="1167.6" cy="663.5" r="5" fill="#f8f8f8" stroke="#999" stroke-width="1"/></svg>
<div class="a" style="left:658px;top:142px;font-size:16px;color:#000;font-family:'Liberation Serif',serif;white-space:nowrap;line-height:18px;font-weight:bold;letter-spacing:1.3px">6#楼一层消防电源1</div>
<div class="a" style="left:359px;top:189.5px;font-size:10px;color:#000;font-family:'Liberation Sans',sans-serif;white-space:nowrap;line-height:12px;width:52px;text-align:right;letter-spacing:0.5px">0.00&nbsp;<span style="margin-left:1px"></span>A</div>
<div class="a" style="left:304px;top:218.5px;font-size:10px;color:#000;font-family:'Liberation Sans',sans-serif;white-space:nowrap;line-height:12px;width:50px;text-align:right;letter-spacing:0.5px">0.00&nbsp;<span style="margin-left:1px"></span>V</div>
<div class="a" style="left:246px;top:244.5px;font-size:10px;color:#000;font-family:'Liberation Sans',sans-serif;white-space:nowrap;line-height:12px;width:52px;text-align:right;letter-spacing:0.5px">0.00&nbsp;<span style="margin-left:1px"></span>V</div>
<div class="a" style="left:359px;top:241.5px;font-size:10px;color:#000;font-family:'Liberation Sans',sans-serif;white-space:nowrap;line-height:12px;width:52px;text-align:right;letter-spacing:0.5px">0.00&nbsp;<span style="margin-left:1px"></span>A</div>
<div class="a" style="left:302px;top:269.5px;font-size:10px;color:#000;font-family:'Liberation Sans',sans-serif;white-space:nowrap;line-height:12px;width:52px;text-align:right;letter-spacing:0.5px">0.00&nbsp;<span style="margin-left:1px"></span>V</div>
<div class="a" style="left:358px;top:294.5px;font-size:10px;color:#000;font-family:'Liberation Sans',sans-serif;white-space:nowrap;line-height:12px;width:51px;text-align:right;letter-spacing:0.5px">0.00&nbsp;<span style="margin-left:1px"></span>A</div>
<div class="a" style="left:421px;top:318.5px;font-size:10px;color:#000;font-family:'Liberation Sans',sans-serif;white-space:nowrap;line-height:12px;width:51px;text-align:right;letter-spacing:0.5px">0.00&nbsp;<span style="margin-left:1px"></span>V</div>
<div class="a" style="left:471px;top:268.5px;font-size:10px;color:#000;font-family:'Liberation Sans',sans-serif;white-space:nowrap;line-height:12px;width:51px;text-align:right;letter-spacing:0.5px">0.00V</div>
<div class="a" style="left:509px;top:216.5px;font-size:10px;color:#000;font-family:'Liberation Sans',sans-serif;white-space:nowrap;line-height:12px;width:51px;text-align:right;letter-spacing:0.5px">0.00&nbsp;<span style="margin-left:1px"></span>V</div>
<div class="a" style="left:417px;top:178px;font-size:13px;color:#ff0000;font-family:'Liberation Sans',sans-serif;white-space:nowrap;line-height:15px;font-weight:bold">C</div>
<div class="a" style="left:417px;top:231px;font-size:13px;color:#00dd00;font-family:'Liberation Sans',sans-serif;white-space:nowrap;line-height:15px;font-weight:bold">B</div>
<div class="a" style="left:417px;top:283px;font-size:13px;color:#ffff00;font-family:'Liberation Sans',sans-serif;white-space:nowrap;line-height:15px;font-weight:bold">A</div>
<div class="a" style="left:416px;top:334px;font-size:13px;color:#0000ee;font-family:'Liberation Sans',sans-serif;white-space:nowrap;line-height:15px;font-weight:bold">N</div>
<div class="a" style="left:255px;top:357px;font-size:10px;color:#000;font-family:'Liberation Sans',sans-serif;white-space:nowrap;line-height:12px;">有功功率</div>
<div class="a" style="left:333px;top:357px;font-size:10px;color:#000;font-family:'Liberation Sans',sans-serif;white-space:nowrap;line-height:12px;">无功功率</div>
<div class="a" style="left:406px;top:357px;font-size:10px;color:#000;font-family:'Liberation Sans',sans-serif;white-space:nowrap;line-height:12px;">功率因数</div>
<div class="a" style="left:495px;top:357px;font-size:10px;color:#000;font-family:'Liberation Sans',sans-serif;white-space:nowrap;line-height:12px;">电能走字</div>
<div class="a" style="left:263px;top:377px;font-size:11px;color:#000;font-family:'Liberation Sans',sans-serif;white-space:nowrap;line-height:13px;">0.00</div>
<div class="a" style="left:290px;top:375.5px;font-size:9px;color:#000;font-family:'Liberation Sans',sans-serif;white-space:nowrap;line-height:11px;">kW</div>
<div class="a" style="left:338px;top:377px;font-size:11px;color:#000;font-family:'Liberation Sans',sans-serif;white-space:nowrap;line-height:13px;">0.00</div>
<div class="a" style="left:362px;top:375.5px;font-size:9px;color:#000;font-family:'Liberation Sans',sans-serif;white-space:nowrap;line-height:11px;">kVar</div>
<div class="a" style="left:418px;top:376px;font-size:11px;color:#000;font-family:'Liberation Sans',sans-serif;white-space:nowrap;line-height:13px;">0.00</div>
<div class="a" style="left:525px;top:377px;font-size:11px;color:#000;font-family:'Liberation Sans',sans-serif;white-space:nowrap;line-height:13px;">0</div>
<div class="a" style="left:536px;top:375.5px;font-size:9px;color:#000;font-family:'Liberation Sans',sans-serif;white-space:nowrap;line-height:11px;">kWh</div>
<div class="a" style="left:595.5px;top:373.0px;width:80px;font-size:11.5px;color:#c2b600;font-family:'Liberation Mono',monospace;white-space:nowrap;line-height:13.5px;text-align:center;transform:scaleX(0.72);transform-origin:center top;">09:11:55</div>
<div class="a" style="left:595.5px;top:382.0px;width:80px;font-size:11.5px;color:#c2b600;font-family:'Liberation Mono',monospace;white-space:nowrap;line-height:13.5px;text-align:center;transform:scaleX(0.72);transform-origin:center top;">2019-02-25</div>
<div class="a" style="left:682.2px;top:373.0px;width:80px;font-size:11.5px;color:#c2b600;font-family:'Liberation Mono',monospace;white-space:nowrap;line-height:13.5px;text-align:center;transform:scaleX(0.72);transform-origin:center top;">13:11:55</div>
<div class="a" style="left:682.2px;top:382.0px;width:80px;font-size:11.5px;color:#c2b600;font-family:'Liberation Mono',monospace;white-space:nowrap;line-height:13.5px;text-align:center;transform:scaleX(0.72);transform-origin:center top;">2019-02-25</div>
<div class="a" style="left:768.8px;top:373.0px;width:80px;font-size:11.5px;color:#c2b600;font-family:'Liberation Mono',monospace;white-space:nowrap;line-height:13.5px;text-align:center;transform:scaleX(0.72);transform-origin:center top;">17:11:55</div>
<div class="a" style="left:768.8px;top:382.0px;width:80px;font-size:11.5px;color:#c2b600;font-family:'Liberation Mono',monospace;white-space:nowrap;line-height:13.5px;text-align:center;transform:scaleX(0.72);transform-origin:center top;">2019-02-25</div>
<div class="a" style="left:855.5px;top:373.0px;width:80px;font-size:11.5px;color:#c2b600;font-family:'Liberation Mono',monospace;white-space:nowrap;line-height:13.5px;text-align:center;transform:scaleX(0.72);transform-origin:center top;">21:11:55</div>
<div class="a" style="left:855.5px;top:382.0px;width:80px;font-size:11.5px;color:#c2b600;font-family:'Liberation Mono',monospace;white-space:nowrap;line-height:13.5px;text-align:center;transform:scaleX(0.72);transform-origin:center top;">2019-02-25</div>
<div class="a" style="left:942.2px;top:373.0px;width:80px;font-size:11.5px;color:#c2b600;font-family:'Liberation Mono',monospace;white-space:nowrap;line-height:13.5px;text-align:center;transform:scaleX(0.72);transform-origin:center top;">01:11:55</div>
<div class="a" style="left:942.2px;top:382.0px;width:80px;font-size:11.5px;color:#c2b600;font-family:'Liberation Mono',monospace;white-space:nowrap;line-height:13.5px;text-align:center;transform:scaleX(0.72);transform-origin:center top;">2019-02-26</div>
<div class="a" style="left:1028.8px;top:373.0px;width:80px;font-size:11.5px;color:#c2b600;font-family:'Liberation Mono',monospace;white-space:nowrap;line-height:13.5px;text-align:center;transform:scaleX(0.72);transform-origin:center top;">05:11:55</div>
<div class="a" style="left:1028.8px;top:382.0px;width:80px;font-size:11.5px;color:#c2b600;font-family:'Liberation Mono',monospace;white-space:nowrap;line-height:13.5px;text-align:center;transform:scaleX(0.72);transform-origin:center top;">2019-02-26</div>
<div class="a" style="left:1115.5px;top:373.0px;width:80px;font-size:11.5px;color:#c2b600;font-family:'Liberation Mono',monospace;white-space:nowrap;line-height:13.5px;text-align:center;transform:scaleX(0.72);transform-origin:center top;">09:11:55</div>
<div class="a" style="left:1115.5px;top:382.0px;width:80px;font-size:11.5px;color:#c2b600;font-family:'Liberation Mono',monospace;white-space:nowrap;line-height:13.5px;text-align:center;transform:scaleX(0.72);transform-origin:center top;">2019-02-26</div>
<div class="a" style="left:597.0px;top:356.0px;width:60px;font-size:11.5px;color:#c2b600;font-family:'Liberation Mono',monospace;white-space:nowrap;line-height:13.5px;text-align:left;transform:scaleX(0.72);transform-origin:left top;">0.00</div>
<div class="a" style="left:597.0px;top:319.7px;width:60px;font-size:11.5px;color:#c2b600;font-family:'Liberation Mono',monospace;white-space:nowrap;line-height:13.5px;text-align:left;transform:scaleX(0.72);transform-origin:left top;">100.00</div>
<div class="a" style="left:597.0px;top:283.4px;width:60px;font-size:11.5px;color:#c2b600;font-family:'Liberation Mono',monospace;white-space:nowrap;line-height:13.5px;text-align:left;transform:scaleX(0.72);transform-origin:left top;">200.00</div>
<div class="a" style="left:597.0px;top:247.1px;width:60px;font-size:11.5px;color:#c2b600;font-family:'Liberation Mono',monospace;white-space:nowrap;line-height:13.5px;text-align:left;transform:scaleX(0.72);transform-origin:left top;">300.00</div>
<div class="a" style="left:597.0px;top:210.8px;width:60px;font-size:11.5px;color:#c2b600;font-family:'Liberation Mono',monospace;white-space:nowrap;line-height:13.5px;text-align:left;transform:scaleX(0.72);transform-origin:left top;">400.00</div>
<div class="a" style="left:597.0px;top:174.5px;width:60px;font-size:11.5px;color:#c2b600;font-family:'Liberation Mono',monospace;white-space:nowrap;line-height:13.5px;text-align:left;transform:scaleX(0.72);transform-origin:left top;">500.00</div>
<div class="a" style="left:594.0px;top:192.0px;width:60px;font-size:11.5px;color:#ff00ff;font-family:'Liberation Mono',monospace;white-space:nowrap;line-height:13.5px;text-align:left;transform:scaleX(0.72);transform-origin:left top;">500.00</div>
<div class="a" style="left:643.0px;top:168.0px;width:140px;font-size:11.5px;color:#ff00ff;font-family:'Liberation Mono',monospace;white-space:nowrap;line-height:13.5px;text-align:left;transform:scaleX(0.72);transform-origin:left top;">2019-02-25 09:11:56</div>
<div class="a" style="left:845px;top:168px;font-size:17px;color:#800000;font-family:'Liberation Serif',serif;white-space:nowrap;line-height:19px;font-weight:bold;letter-spacing:0.5px">24小时电流曲线</div>
<div class="a" style="left:1158.0px;top:182.0px;width:80px;font-size:11.5px;color:#c2b600;font-family:'Liberation Mono',monospace;white-space:nowrap;line-height:13.5px;text-align:left;transform:scaleX(0.83);transform-origin:left top;">A相电流</div>
<div class="a" style="left:1163.0px;top:191.5px;width:80px;font-size:11.5px;color:#c2b600;font-family:'Liberation Mono',monospace;white-space:nowrap;line-height:13.5px;text-align:left;transform:scaleX(0.72);transform-origin:left top;">Y[0.00]</div>
<div class="a" style="left:1158.0px;top:233.0px;width:80px;font-size:11.5px;color:#00c000;font-family:'Liberation Mono',monospace;white-space:nowrap;line-height:13.5px;text-align:left;transform:scaleX(0.83);transform-origin:left top;">B相电流</div>
<div class="a" style="left:1163.0px;top:242.5px;width:80px;font-size:11.5px;color:#00c000;font-family:'Liberation Mono',monospace;white-space:nowrap;line-height:13.5px;text-align:left;transform:scaleX(0.72);transform-origin:left top;">Y[0.00]</div>
<div class="a" style="left:1158.0px;top:284.0px;width:80px;font-size:11.5px;color:#ff0000;font-family:'Liberation Mono',monospace;white-space:nowrap;line-height:13.5px;text-align:left;transform:scaleX(0.83);transform-origin:left top;">C相电流</div>
<div class="a" style="left:1163.0px;top:293.5px;width:80px;font-size:11.5px;color:#ff0000;font-family:'Liberation Mono',monospace;white-space:nowrap;line-height:13.5px;text-align:left;transform:scaleX(0.72);transform-origin:left top;">Y[0.00]</div>
<div class="a" style="left:1159.0px;top:340.0px;width:40px;font-size:11.5px;color:#000;font-family:'Liberation Mono',monospace;white-space:nowrap;line-height:13.5px;text-align:left;transform:scaleX(0.72);transform-origin:left top;">A11</div>
<div class="a" style="left:255.0px;top:618.0px;width:80px;font-size:11.5px;color:#c2b600;font-family:'Liberation Mono',monospace;white-space:nowrap;line-height:13.5px;text-align:center;transform:scaleX(0.72);transform-origin:center top;">09:11:55</div>
<div class="a" style="left:255.0px;top:627.0px;width:80px;font-size:11.5px;color:#c2b600;font-family:'Liberation Mono',monospace;white-space:nowrap;line-height:13.5px;text-align:center;transform:scaleX(0.72);transform-origin:center top;">2019-02-19</div>
<div class="a" style="left:377.9px;top:618.0px;width:80px;font-size:11.5px;color:#c2b600;font-family:'Liberation Mono',monospace;white-space:nowrap;line-height:13.5px;text-align:center;transform:scaleX(0.72);transform-origin:center top;">09:11:55</div>
<div class="a" style="left:377.9px;top:627.0px;width:80px;font-size:11.5px;color:#c2b600;font-family:'Liberation Mono',monospace;white-space:nowrap;line-height:13.5px;text-align:center;transform:scaleX(0.72);transform-origin:center top;">2019-02-20</div>
<div class="a" style="left:500.9px;top:618.0px;width:80px;font-size:11.5px;color:#c2b600;font-family:'Liberation Mono',monospace;white-space:nowrap;line-height:13.5px;text-align:center;transform:scaleX(0.72);transform-origin:center top;">09:11:55</div>
<div class="a" style="left:500.9px;top:627.0px;width:80px;font-size:11.5px;color:#c2b600;font-family:'Liberation Mono',monospace;white-space:nowrap;line-height:13.5px;text-align:center;transform:scaleX(0.72);transform-origin:center top;">2019-02-21</div>
<div class="a" style="left:623.8px;top:618.0px;width:80px;font-size:11.5px;color:#c2b600;font-family:'Liberation Mono',monospace;white-space:nowrap;line-height:13.5px;text-align:center;transform:scaleX(0.72);transform-origin:center top;">09:11:55</div>
<div class="a" style="left:623.8px;top:627.0px;width:80px;font-size:11.5px;color:#c2b600;font-family:'Liberation Mono',monospace;white-space:nowrap;line-height:13.5px;text-align:center;transform:scaleX(0.72);transform-origin:center top;">2019-02-22</div>
<div class="a" style="left:746.7px;top:618.0px;width:80px;font-size:11.5px;color:#c2b600;font-family:'Liberation Mono',monospace;white-space:nowrap;line-height:13.5px;text-align:center;transform:scaleX(0.72);transform-origin:center top;">09:11:55</div>
<div class="a" style="left:746.7px;top:627.0px;width:80px;font-size:11.5px;color:#c2b600;font-family:'Liberation Mono',monospace;white-space:nowrap;line-height:13.5px;text-align:center;transform:scaleX(0.72);transform-origin:center top;">2019-02-23</div>
<div class="a" style="left:869.6px;top:618.0px;width:80px;font-size:11.5px;color:#c2b600;font-family:'Liberation Mono',monospace;white-space:nowrap;line-height:13.5px;text-align:center;transform:scaleX(0.72);transform-origin:center top;">09:11:55</div>
<div class="a" style="left:869.6px;top:627.0px;width:80px;font-size:11.5px;color:#c2b600;font-family:'Liberation Mono',monospace;white-space:nowrap;line-height:13.5px;text-align:center;transform:scaleX(0.72);transform-origin:center top;">2019-02-24</div>
<div class="a" style="left:992.6px;top:618.0px;width:80px;font-size:11.5px;color:#c2b600;font-family:'Liberation Mono',monospace;white-space:nowrap;line-height:13.5px;text-align:center;transform:scaleX(0.72);transform-origin:center top;">09:11:55</div>
<div class="a" style="left:992.6px;top:627.0px;width:80px;font-size:11.5px;color:#c2b600;font-family:'Liberation Mono',monospace;white-space:nowrap;line-height:13.5px;text-align:center;transform:scaleX(0.72);transform-origin:center top;">2019-02-25</div>
<div class="a" style="left:1115.5px;top:618.0px;width:80px;font-size:11.5px;color:#c2b600;font-family:'Liberation Mono',monospace;white-space:nowrap;line-height:13.5px;text-align:center;transform:scaleX(0.72);transform-origin:center top;">09:11:55</div>
<div class="a" style="left:1115.5px;top:627.0px;width:80px;font-size:11.5px;color:#c2b600;font-family:'Liberation Mono',monospace;white-space:nowrap;line-height:13.5px;text-align:center;transform:scaleX(0.72);transform-origin:center top;">2019-02-26</div>
<div class="a" style="left:256.5px;top:601.0px;width:60px;font-size:11.5px;color:#c2b600;font-family:'Liberation Mono',monospace;white-space:nowrap;line-height:13.5px;text-align:left;transform:scaleX(0.72);transform-origin:left top;">0.00</div>
<div class="a" style="left:256.5px;top:564.1px;width:60px;font-size:11.5px;color:#c2b600;font-family:'Liberation Mono',monospace;white-space:nowrap;line-height:13.5px;text-align:left;transform:scaleX(0.72);transform-origin:left top;">100.00</div>
<div class="a" style="left:256.5px;top:527.2px;width:60px;font-size:11.5px;color:#c2b600;font-family:'Liberation Mono',monospace;white-space:nowrap;line-height:13.5px;text-align:left;transform:scaleX(0.72);transform-origin:left top;">200.00</div>
<div class="a" style="left:256.5px;top:490.3px;width:60px;font-size:11.5px;color:#c2b600;font-family:'Liberation Mono',monospace;white-space:nowrap;line-height:13.5px;text-align:left;transform:scaleX(0.72);transform-origin:left top;">300.00</div>
<div class="a" style="left:256.5px;top:453.4px;width:60px;font-size:11.5px;color:#c2b600;font-family:'Liberation Mono',monospace;white-space:nowrap;line-height:13.5px;text-align:left;transform:scaleX(0.72);transform-origin:left top;">400.00</div>
<div class="a" style="left:256.5px;top:416.5px;width:60px;font-size:11.5px;color:#c2b600;font-family:'Liberation Mono',monospace;white-space:nowrap;line-height:13.5px;text-align:left;transform:scaleX(0.72);transform-origin:left top;">500.00</div>
<div class="a" style="left:253.5px;top:434.0px;width:60px;font-size:11.5px;color:#ff00ff;font-family:'Liberation Mono',monospace;white-space:nowrap;line-height:13.5px;text-align:left;transform:scaleX(0.72);transform-origin:left top;">500.00</div>
<div class="a" style="left:302.0px;top:410.0px;width:140px;font-size:11.5px;color:#ff00ff;font-family:'Liberation Mono',monospace;white-space:nowrap;line-height:13.5px;text-align:left;transform:scaleX(0.72);transform-origin:left top;">2019-02-19 09:11:56</div>
<div class="a" style="left:694px;top:410px;font-size:17px;color:#800000;font-family:'Liberation Serif',serif;white-space:nowrap;line-height:19px;font-weight:bold;letter-spacing:0.5px">7日电流曲线</div>
<div class="a" style="left:1158.0px;top:424.0px;width:80px;font-size:11.5px;color:#c2b600;font-family:'Liberation Mono',monospace;white-space:nowrap;line-height:13.5px;text-align:left;transform:scaleX(0.83);transform-origin:left top;">A相电流</div>
<div class="a" style="left:1163.0px;top:433.5px;width:80px;font-size:11.5px;color:#c2b600;font-family:'Liberation Mono',monospace;white-space:nowrap;line-height:13.5px;text-align:left;transform:scaleX(0.72);transform-origin:left top;">Y[0.00]</div>
<div class="a" style="left:1158.0px;top:476.0px;width:80px;font-size:11.5px;color:#00c000;font-family:'Liberation Mono',monospace;white-space:nowrap;line-height:13.5px;text-align:left;transform:scaleX(0.83);transform-origin:left top;">B相电流</div>
<div class="a" style="left:1163.0px;top:485.5px;width:80px;font-size:11.5px;color:#00c000;font-family:'Liberation Mono',monospace;white-space:nowrap;line-height:13.5px;text-align:left;transform:scaleX(0.72);transform-origin:left top;">Y[0.00]</div>
<div class="a" style="left:1158.0px;top:527.0px;width:80px;font-size:11.5px;color:#ff0000;font-family:'Liberation Mono',monospace;white-space:nowrap;line-height:13.5px;text-align:left;transform:scaleX(0.83);transform-origin:left top;">C相电流</div>
<div class="a" style="left:1163.0px;top:536.5px;width:80px;font-size:11.5px;color:#ff0000;font-family:'Liberation Mono',monospace;white-space:nowrap;line-height:13.5px;text-align:left;transform:scaleX(0.72);transform-origin:left top;">Y[0.00]</div>
<div class="a" style="left:1159.0px;top:582.0px;width:40px;font-size:11.5px;color:#000;font-family:'Liberation Mono',monospace;white-space:nowrap;line-height:13.5px;text-align:left;transform:scaleX(0.72);transform-origin:left top;">A11</div>
<div class="a" style="left:237px;top:657px;font-size:13px;color:#000;font-family:'Liberation Sans',sans-serif;white-space:nowrap;line-height:15px;">查询时间:</div>
<div class="a" style="left:291px;top:656px;width:190px;height:19px;background:#fff;border:1px solid #999"></div>
<div class="a" style="left:390px;top:657px;width:2px;height:17px;background:#e0e0e0"></div>
<div class="a" style="left:294px;top:658px;font-size:13px;color:#000;font-family:'Liberation Mono',monospace;white-space:nowrap;line-height:15px;letter-spacing:-0.4px">2019/ 2/26</div>
<div class="a" style="left:399px;top:658px;font-size:13px;color:#000;font-family:'Liberation Mono',monospace;white-space:nowrap;line-height:15px;letter-spacing:-0.4px">9:11:55</div>
<div class="a" style="left:461px;top:658px;width:16px;height:7px;background:linear-gradient(#f4f4f4,#dcdcdc);border:1px solid #aaa"></div>
<div class="a" style="left:461px;top:666px;width:16px;height:7px;background:linear-gradient(#f4f4f4,#dcdcdc);border:1px solid #aaa"></div>
<div class="a" style="left:487px;top:655px;width:58px;height:19px;background:#a4f8f8;border:1px solid #c8fcfc"></div>
<div class="a" style="left:487px;top:660px;font-size:10px;color:#000;font-family:'Liberation Sans',sans-serif;white-space:nowrap;line-height:12px;width:58px;text-align:center">历史曲线</div>
<div class="a" style="left:548px;top:655px;width:58px;height:19px;background:#a4f8f8;border:1px solid #c8fcfc"></div>
<div class="a" style="left:548px;top:662px;font-size:10px;color:#000;font-family:'Liberation Sans',sans-serif;white-space:nowrap;line-height:12px;width:58px;text-align:center">实时曲线</div>
<div class="a" style="left:609px;top:655px;width:59px;height:19px;background:#a4f8f8;border:1px solid #c8fcfc"></div>
<div class="a" style="left:609px;top:660px;font-size:10px;color:#000;font-family:'Liberation Sans',sans-serif;white-space:nowrap;line-height:12px;width:59px;text-align:center">鼠标平移</div>
<div class="a" style="left:671px;top:655px;width:58px;height:19px;background:#a4f8f8;border:1px solid #c8fcfc"></div>
<div class="a" style="left:671px;top:660px;font-size:10px;color:#000;font-family:'Liberation Sans',sans-serif;white-space:nowrap;line-height:12px;width:58px;text-align:center">鼠标缩放</div>
<div class="a" style="left:733px;top:655px;width:58px;height:19px;background:#a4f8f8;border:1px solid #c8fcfc"></div>
<div class="a" style="left:733px;top:660px;font-size:10px;color:#000;font-family:'Liberation Sans',sans-serif;white-space:nowrap;line-height:12px;width:58px;text-align:center">打印曲线</div>
<div class="a" style="left:800px;top:659px;font-size:13px;color:#000;font-family:'Liberation Mono',monospace;white-space:nowrap;line-height:15px;letter-spacing:-0.5px">里程选择:</div>
<div class="a" style="left:876.5px;top:660px;font-size:13px;color:#000;font-family:'Liberation Mono',monospace;white-space:nowrap;line-height:15px;letter-spacing:-1.2px">0.25X</div>
<div class="a" style="left:936px;top:660px;font-size:13px;color:#000;font-family:'Liberation Mono',monospace;white-space:nowrap;line-height:15px;letter-spacing:-1.2px">0.5X</div>
<div class="a" style="left:996px;top:658px;font-size:14px;color:#000;font-family:'Liberation Sans',sans-serif;white-space:nowrap;line-height:16px;">原始</div>
<div class="a" style="left:1057px;top:660px;font-size:13px;color:#000;font-family:'Liberation Mono',monospace;white-space:nowrap;line-height:15px;letter-spacing:-1.2px">2X</div>
<div class="a" style="left:1116px;top:660px;font-size:13px;color:#000;font-family:'Liberation Mono',monospace;white-space:nowrap;line-height:15px;letter-spacing:-1.2px">4X</div>
<div class="a" style="left:1176.7px;top:658px;font-size:14px;color:#000;font-family:'Liberation Sans',sans-serif;white-space:nowrap;line-height:16px;">自适应</div>
<svg class="a" style="left:0;top:0" width="1440" height="900"><path d="M378 663.5 L386 663.5 L382 668 Z" fill="#000"/>
<path d="M465.5 663 L472.5 663 L469 659.5 Z" fill="#4060a0"/><path d="M465.5 667.5 L472.5 667.5 L469 671 Z" fill="#4060a0"/></svg>
<!-- /DIALOG -->
<!-- NAV -->
<div id="nav" class="a"></div>
<div id="navline" class="a"></div>
<div id="navline2" class="a"></div>
<div class="a sep" style="left:123px"></div>
<div class="a sep" style="left:253px"></div>
<div class="a sep" style="left:380px"></div>
<div class="a sep" style="left:509px"></div>
<div class="a sep" style="left:638px"></div>
<div class="a sep" style="left:763px"></div>
<div class="a sep" style="left:896px"></div>
<div class="a sep" style="left:1027px"></div>
<div class="a sep" style="left:1155px"></div>
<div class="a sep" style="left:1265px"></div>
<div class="a sep" style="left:1371px"></div>
<div class="a" style="left:120px;top:895px;width:8px;height:2px;background:linear-gradient(90deg,rgba(200,255,255,0),#c8ffff 40%,#c8ffff 60%,rgba(200,255,255,0))"></div>
<div class="a" style="left:250px;top:895px;width:8px;height:2px;background:linear-gradient(90deg,rgba(200,255,255,0),#c8ffff 40%,#c8ffff 60%,rgba(200,255,255,0))"></div>
<div class="a" style="left:377px;top:895px;width:8px;height:2px;background:linear-gradient(90deg,rgba(200,255,255,0),#c8ffff 40%,#c8ffff 60%,rgba(200,255,255,0))"></div>
<div class="a" style="left:506px;top:895px;width:8px;height:2px;background:linear-gradient(90deg,rgba(200,255,255,0),#c8ffff 40%,#c8ffff 60%,rgba(200,255,255,0))"></div>
<div class="a" style="left:635px;top:895px;width:8px;height:2px;background:linear-gradient(90deg,rgba(200,255,255,0),#c8ffff 40%,#c8ffff 60%,rgba(200,255,255,0))"></div>
<div class="a" style="left:760px;top:895px;width:8px;height:2px;background:linear-gradient(90deg,rgba(200,255,255,0),#c8ffff 40%,#c8ffff 60%,rgba(200,255,255,0))"></div>
<div class="a" style="left:893px;top:895px;width:8px;height:2px;background:linear-gradient(90deg,rgba(200,255,255,0),#c8ffff 40%,#c8ffff 60%,rgba(200,255,255,0))"></div>
<div class="a" style="left:1024px;top:895px;width:8px;height:2px;background:linear-gradient(90deg,rgba(200,255,255,0),#c8ffff 40%,#c8ffff 60%,rgba(200,255,255,0))"></div>
<div class="a" style="left:1152px;top:895px;width:8px;height:2px;background:linear-gradient(90deg,rgba(200,255,255,0),#c8ffff 40%,#c8ffff 60%,rgba(200,255,255,0))"></div>
<div class="a" style="left:1262px;top:895px;width:8px;height:2px;background:linear-gradient(90deg,rgba(200,255,255,0),#c8ffff 40%,#c8ffff 60%,rgba(200,255,255,0))"></div>
<div class="a" style="left:1368px;top:895px;width:8px;height:2px;background:linear-gradient(90deg,rgba(200,255,255,0),#c8ffff 40%,#c8ffff 60%,rgba(200,255,255,0))"></div>
<div class="a nt" style="left:9.4px;width:100px;text-align:center">配电监测</div>
<div class="a nt" style="left:138.8px;width:100px;text-align:center">电能报表</div>
<div class="a nt" style="left:266.9px;width:100px;text-align:center">电参量报表</div>
<div class="a nt" style="left:392.5px;width:100px;text-align:center">报警查询</div>
<div class="a nt" style="left:526.2px;width:100px;text-align:center">通讯状态</div>
<div class="a nt" style="left:650.6px;width:100px;text-align:center">用户管理</div>

<!-- IME -->
<div class="a" style="left:1255px;top:838px;width:185px;height:22px;background:#fff"></div>
<svg class="a" style="left:1225px;top:828px" width="215" height="40">
<g transform="rotate(-14 23 19)"><rect x="10" y="7" width="26" height="24" rx="4" fill="#ee5622"/>
<path d="M30 12.5 Q22 9.5 16.5 13 Q13 16.5 19 18 L26 19.5 Q30 21 26.5 24.5 Q21 27 14 24" fill="none" stroke="#fff" stroke-width="4.2" stroke-linecap="round"/></g>
<g fill="#1f6fc5">
<text x="42.5" y="27" font-size="15" font-weight="bold" font-family="Liberation Sans,sans-serif">中</text>
<circle cx="68" cy="17.5" r="1.8" fill="none" stroke="#1f6fc5" stroke-width="1.3"/>
<path d="M74 21 Q77 21 76 24.5 L73.5 27.5 Q75.5 24 73.5 23.5 Z"/>
</g>
<g fill="none" stroke="#1f6fc5" stroke-width="1.8">
<circle cx="94" cy="20.7" r="7.2"/>
<path d="M90 22 Q94 26.5 98 22"/>
<rect x="131" y="16" width="15" height="10" rx="1.5"/>
</g>
<g fill="#1f6fc5">
<circle cx="91.5" cy="18.5" r="1"/><circle cx="96.5" cy="18.5" r="1"/>
<rect x="113" y="13" width="6" height="10" rx="3"/>
<path d="M110.5 20 Q110.5 26 116 26 Q121.5 26 121.5 20" fill="none" stroke="#1f6fc5" stroke-width="1.5"/>
<rect x="115.3" y="26" width="1.4" height="3"/><rect x="112.5" y="28.5" width="7" height="1.4"/>
<rect x="133.5" y="18.5" width="2" height="1.6"/><rect x="136.5" y="18.5" width="2" height="1.6"/><rect x="139.5" y="18.5" width="2" height="1.6"/><rect x="142.5" y="18.5" width="1.5" height="1.6"/>
<rect x="133.5" y="21.3" width="2" height="1.6"/><rect x="136.5" y="21.3" width="2" height="1.6"/><rect x="139.5" y="21.3" width="2" height="1.6"/><rect x="142.5" y="21.3" width="1.5" height="1.6"/>
<rect x="135.5" y="24" width="7" height="1.2"/>
<path d="M175 15 L179 14 Q181.5 16 184 14 L188 15 L190 19 L187.5 20.5 L187.5 28 L176.5 28 L176.5 20.5 L174 19 Z"/>
<rect x="196.5" y="15" width="5.5" height="5.5"/><rect x="196.5" y="22" width="5.5" height="5.5"/><rect x="203.5" y="22" width="5.5" height="5.5"/>
<rect x="203.8" y="15.3" width="4.9" height="4.9" fill="none" stroke="#1f6fc5" stroke-width="1.2"/>
</g>
<g fill="#c0c8d4"><circle cx="159.5" cy="17" r="3.6"/><path d="M153.5 28 Q153.5 21 159.5 21 Q165.5 21 165.5 28 Z"/></g>
</svg>
<!-- /IME -->

</body></html>
